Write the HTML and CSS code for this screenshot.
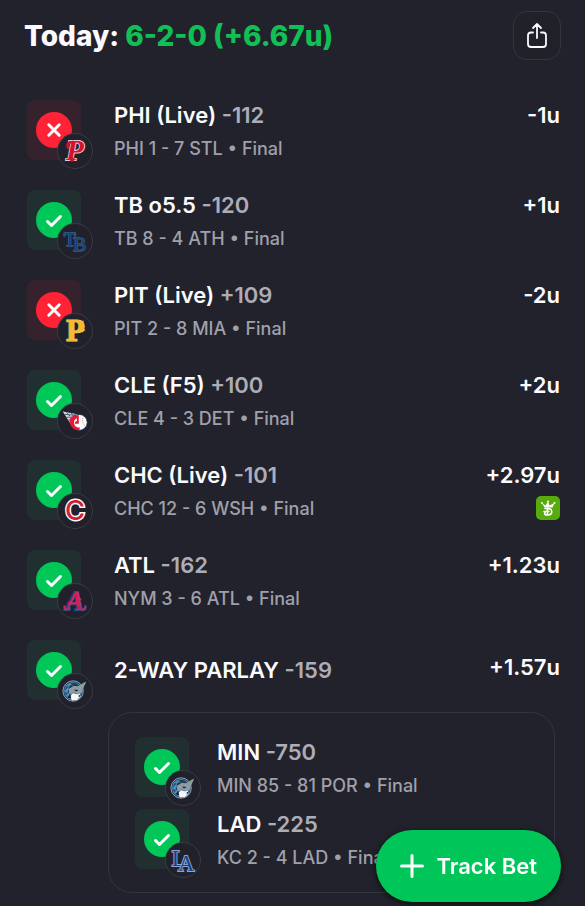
FILE: index.html
```html
<!DOCTYPE html>
<html lang="en">
<head>
    <meta charset="UTF-8">
    <meta name="viewport" content="width=device-width, initial-scale=1.0">
    <title>Today's Bets</title>
    <link rel="stylesheet" href="styles.css">
</head>
<body>
    <!-- Shared icons -->
    <svg class="sprite" aria-hidden="true">
        <symbol id="icon-win" viewBox="0 0 36 36">
            <circle cx="18" cy="18" r="18" fill="#00c758"/>
            <path d="M11.500 19.500l4 4 9-9" fill="none" stroke="#fff" stroke-width="3" stroke-linecap="round" stroke-linejoin="round"/>
        </symbol>
        <symbol id="icon-loss" viewBox="0 0 36 36">
            <circle cx="18" cy="18" r="18" fill="#ff2335"/>
            <path d="M12.800 12.800l10.400 10.400M23.200 12.800L12.800 23.200" fill="none" stroke="#fff" stroke-width="3" stroke-linecap="round"/>
        </symbol>
        <symbol id="logo-lynx" viewBox="0 0 36 36">
            <circle cx="16" cy="18" r="10.800" fill="#1c3554" stroke="#a9b8c6" stroke-width="0.900"/>
            <circle cx="16" cy="18" r="9" fill="none" stroke="#3f83b5" stroke-width="1.200"/>
            <path d="M8 13l6-4-1 4zM7 18l5-6-2 9zM8 23l4-4v6z" fill="#4b8fbb"/>
            <path d="M11 16l6-3.500 4 .5 9-5-3.500 7.500-1 4-3 2-3-.5-3-1.500-4 3z" fill="#8e9ca8"/>
            <path d="M12 24l4-4 4 1.500 3-.5 1 3-4 3.500-5 .5z" fill="#f4f6f8"/>
            <path d="M10 25l3-4 1 5M17 16.500l5 .5-3 1.500zM22 22l2 1-2 2z" fill="#102338"/>
            <path d="M12 10.500l4 1.500M22 13l6-4" stroke="#6aa053" stroke-width="0.800"/>
        </symbol>
    </svg>

    <header class="header">
        <h1>Today: <span class="record">6-2-0 (+6.67u)</span></h1>
        <button class="share-btn" type="button" aria-label="Share">
            <svg viewBox="0 0 24 28" width="24" height="28" fill="none" stroke="currentColor" stroke-width="1.800" stroke-linecap="round" stroke-linejoin="round">
                <path d="M8 10.500H6A3 3 0 0 0 3 13.500V22a3 3 0 0 0 3 3h12a3 3 0 0 0 3-3v-8.500a3 3 0 0 0-3-3h-2M12 16V2M8 6l4-4 4 4"/>
            </svg>
        </button>
    </header>

    <main>
        <ul class="bets">
            <li class="bet">
                <div class="status loss">
                    <svg class="result"><use href="#icon-loss"/></svg>
                    <svg class="team" viewBox="0 0 36 36">
                        <text class="logo-text phillies" x="18" y="28">P</text>
                        <circle cx="15" cy="27" r="2.500" fill="#d3122f"/>
                        <path d="M10.500 14.500c-2-4 2-6.500 6-6" fill="none" stroke="#d3122f" stroke-width="2.500" stroke-linecap="round"/>
                    </svg>
                </div>
                <div class="info">
                    <h2>PHI (Live) <span>-112</span></h2>
                    <p>PHI 1 - 7 STL • Final</p>
                </div>
                <div class="units">-1u</div>
            </li>
            <li class="bet">
                <div class="status win">
                    <svg class="result"><use href="#icon-win"/></svg>
                    <svg class="team" viewBox="0 0 36 36">
                        <text class="logo-text rays" x="18" y="23">T<tspan dx="-3" dy="6">B</tspan></text>
                    </svg>
                </div>
                <div class="info">
                    <h2>TB o5.5 <span>-120</span></h2>
                    <p>TB 8 - 4 ATH • Final</p>
                </div>
                <div class="units">+1u</div>
            </li>
            <li class="bet">
                <div class="status loss">
                    <svg class="result"><use href="#icon-loss"/></svg>
                    <svg class="team" viewBox="0 0 36 36">
                        <text class="logo-text pirates" x="18" y="29">P</text>
                        <path d="M24 8l3-1v4zM26 14l3 3-4 3z" fill="#fdb827"/>
                    </svg>
                </div>
                <div class="info">
                    <h2>PIT (Live) <span>+109</span></h2>
                    <p>PIT 2 - 8 MIA • Final</p>
                </div>
                <div class="units">-2u</div>
            </li>
            <li class="bet">
                <div class="status win">
                    <svg class="result"><use href="#icon-win"/></svg>
                    <svg class="team" viewBox="0 0 36 36">
                        <path d="M5 8l17 3-2 6-6 5z" fill="#d9dde3"/>
                        <path d="M7 11l12 1M9 14l9 0M11 17l6-1M9 9l4 4M13 9l4 4M17 10l3 3" stroke="#39465e" stroke-width="0.900"/>
                        <circle cx="22.500" cy="19.500" r="8.500" fill="#fff" stroke="#1a2b4a" stroke-width="1"/>
                        <path d="M20 12c-6 0-9 4-7 9 1 5 5 7 10 7v-3c-4 0-6-2-6-6 0-2 1-3 3-4v3l-2 1v2h4v-9z" fill="#e31937"/>
                        <path d="M27 13c-2 4-1 8 2 11" fill="none" stroke="#e7798a" stroke-width="1" stroke-dasharray="1 1"/>
                    </svg>
                </div>
                <div class="info">
                    <h2>CLE (F5) <span>+100</span></h2>
                    <p>CLE 4 - 3 DET • Final</p>
                </div>
                <div class="units">+2u</div>
            </li>
            <li class="bet">
                <div class="status win">
                    <svg class="result"><use href="#icon-win"/></svg>
                    <svg class="team" viewBox="0 0 36 36">
                        <text class="logo-text cubs" x="18" y="28">C</text>
                    </svg>
                </div>
                <div class="info">
                    <h2>CHC (Live) <span>-101</span></h2>
                    <p>CHC 12 - 6 WSH • Final</p>
                </div>
                <div class="units">
                    +2.97u
                    <svg class="book" viewBox="0 0 24 24" role="img" aria-label="Sportsbook">
                        <path d="M6 7l3.500 2.500L12 5.500l1.500 4L18.500 7l-2 4.500H8.500z" fill="#fff"/>
                        <circle cx="6" cy="7" r="1" fill="#fff"/>
                        <circle cx="12" cy="5.500" r="1" fill="#fff"/>
                        <circle cx="18.500" cy="7" r="1" fill="#fff"/>
                        <path d="M9 12.500h3c5 0 5 6.500 0 6.500-3 0-4-1-3-2.500M11.500 12v6M8 15.500h5" fill="none" stroke="#fff" stroke-width="1.600" stroke-linecap="round"/>
                    </svg>
                </div>
            </li>
            <li class="bet">
                <div class="status win">
                    <svg class="result"><use href="#icon-win"/></svg>
                    <svg class="team" viewBox="0 0 36 36">
                        <text class="logo-text braves" x="18" y="27">A</text>
                        <path d="M12 25c-2 3-5 3-5-1M24 25c1 3 5 3 5-1" fill="none" stroke="#214f8c" stroke-width="3" stroke-linecap="round"/>
                        <path d="M12 25c-2 3-5 3-5-1M24 25c1 3 5 3 5-1M11 20c4 2 8 0 13-4" fill="none" stroke="#d81f55" stroke-width="1.800" stroke-linecap="round"/>
                    </svg>
                </div>
                <div class="info">
                    <h2>ATL <span>-162</span></h2>
                    <p>NYM 3 - 6 ATL • Final</p>
                </div>
                <div class="units">+1.23u</div>
            </li>
            <li class="bet parlay">
                <div class="status win">
                    <svg class="result"><use href="#icon-win"/></svg>
                    <svg class="team"><use href="#logo-lynx"/></svg>
                </div>
                <div class="info">
                    <h2>2-WAY PARLAY <span>-159</span></h2>
                </div>
                <div class="units">+1.57u</div>
                <ul class="legs">
                    <li class="leg">
                        <div class="status win">
                            <svg class="result"><use href="#icon-win"/></svg>
                            <svg class="team"><use href="#logo-lynx"/></svg>
                        </div>
                        <div class="info">
                            <h2>MIN <span>-750</span></h2>
                            <p>MIN 85 - 81 POR • Final</p>
                        </div>
                    </li>
                    <li class="leg">
                        <div class="status win">
                            <svg class="result"><use href="#icon-win"/></svg>
                            <svg class="team" viewBox="0 0 36 36">
                                <text class="logo-text dodgers" x="18" y="24">L<tspan dx="-8" dy="6">A</tspan></text>
                            </svg>
                        </div>
                        <div class="info">
                            <h2>LAD <span>-225</span></h2>
                            <p>KC 2 - 4 LAD • Final</p>
                        </div>
                    </li>
                </ul>
            </li>
        </ul>
    </main>

    <button class="track-btn" type="button">
        <svg viewBox="0 0 24 24" width="24" height="24" fill="none" stroke="currentColor" stroke-width="3" stroke-linecap="round" aria-hidden="true">
            <path d="M12 1.500v21M1.500 12h21"/>
        </svg>
        Track Bet
    </button>
</body>
</html>
```

FILE: styles.css
```css
* {
    margin: 0;
    padding: 0;
    box-sizing: border-box;
}

body {
    background: #22222c;
    color: #fafaff;
    font-family: Inter, "Liberation Sans", sans-serif;
}

ul {
    list-style: none;
}

.sprite {
    position: absolute;
    width: 0;
    height: 0;
}

/* Header */
.header {
    display: flex;
    justify-content: space-between;
    align-items: center;
    padding: 11px 24px 0;
}

h1 {
    font-size: 28px;
    line-height: 48px;
    font-weight: 800;
}

.record {
    color: #12bf55;
}

.share-btn {
    display: flex;
    align-items: center;
    justify-content: center;
    width: 48px;
    height: 49px;
    background: #21212a;
    border: 1px solid #34343e;
    border-radius: 14px;
    color: #fafaff;
    cursor: pointer;
}

/* Bet list */
.bets {
    padding: 40px 25px 0 27px;
}

.bet {
    display: grid;
    grid-template-columns: 66px 1fr auto;
    column-gap: 21px;
    min-height: 90px;
}

.status {
    position: relative;
    width: 54px;
    height: 60px;
    border-radius: 8px;
    display: flex;
    align-items: center;
    justify-content: center;
}

.status.win {
    background: #212f31;
}

.status.loss {
    background: #35222c;
}

.result {
    width: 36px;
    height: 36px;
}

/* Team badge sits over the corner of the status tile */
.team {
    position: absolute;
    right: -12px;
    bottom: -9px;
    width: 36px;
    height: 36px;
    background: #21212b;
    border: 1px solid #3a3a43;
    border-radius: 50%;
}

.info h2,
.units {
    font-size: 22px;
    line-height: 30px;
    font-weight: 600;
}

.info h2 span {
    color: #adadb7;
}

.info p {
    margin-top: 5px;
    font-size: 18px;
    line-height: 28px;
    font-weight: 500;
    color: #a0a0aa;
}

.units {
    display: flex;
    flex-direction: column;
    align-items: flex-end;
    gap: 6px;
}

.book {
    width: 24px;
    height: 24px;
    border-radius: 5px;
    background: #58ab0c;
}

/* Parlay */
.parlay > .info {
    padding-top: 15px;
}

.parlay > .units {
    padding-top: 12px;
}

.legs {
    grid-column: 1 / -1;
    display: flex;
    flex-direction: column;
    gap: 12px;
    margin: 12px 5px 16px 81px;
    padding: 24px 26px 23px;
    border: 1px solid #34343e;
    border-radius: 24px;
}

.leg {
    display: grid;
    grid-template-columns: 66px 1fr;
    column-gap: 16px;
    height: 60px;
}

/* Team logos */
.logo-text {
    font-family: "Liberation Serif", serif;
    font-weight: 700;
    text-anchor: middle;
    paint-order: stroke;
}

.phillies {
    font-size: 31px;
    font-style: italic;
    fill: #d3122f;
    stroke: #e9c8d0;
    stroke-width: 2px;
}

.rays {
    font-size: 21px;
    font-weight: 400;
    fill: #17406f;
    stroke: #3a78b4;
    stroke-width: 1px;
}

.pirates {
    font-family: "DejaVu Serif Condensed", "DejaVu Serif", serif;
    font-size: 30px;
    fill: #fdb827;
    stroke: #d8cfae;
    stroke-width: 1px;
}

.cubs {
    font-family: Inter, sans-serif;
    font-size: 29px;
    font-weight: 500;
    fill: #cf1f3a;
    stroke: #fff;
    stroke-width: 3px;
}

.braves {
    font-size: 29px;
    font-style: italic;
    fill: #d81f55;
    stroke: #214f8c;
    stroke-width: 2px;
}

.dodgers {
    font-size: 24px;
    font-weight: 400;
    fill: #12418c;
    stroke: #8ea5cc;
    stroke-width: 2px;
}

/* Floating button */
.track-btn {
    position: fixed;
    right: 24px;
    bottom: 4px;
    display: flex;
    align-items: center;
    gap: 12px;
    height: 72px;
    padding: 0 24px;
    border: none;
    border-radius: 36px;
    background: #00c65a;
    color: #fff;
    font-family: inherit;
    font-size: 22px;
    font-weight: 600;
    white-space: nowrap;
    box-shadow: 0 2px 6px rgba(0, 0, 0, 0.7);
    cursor: pointer;
}
```
